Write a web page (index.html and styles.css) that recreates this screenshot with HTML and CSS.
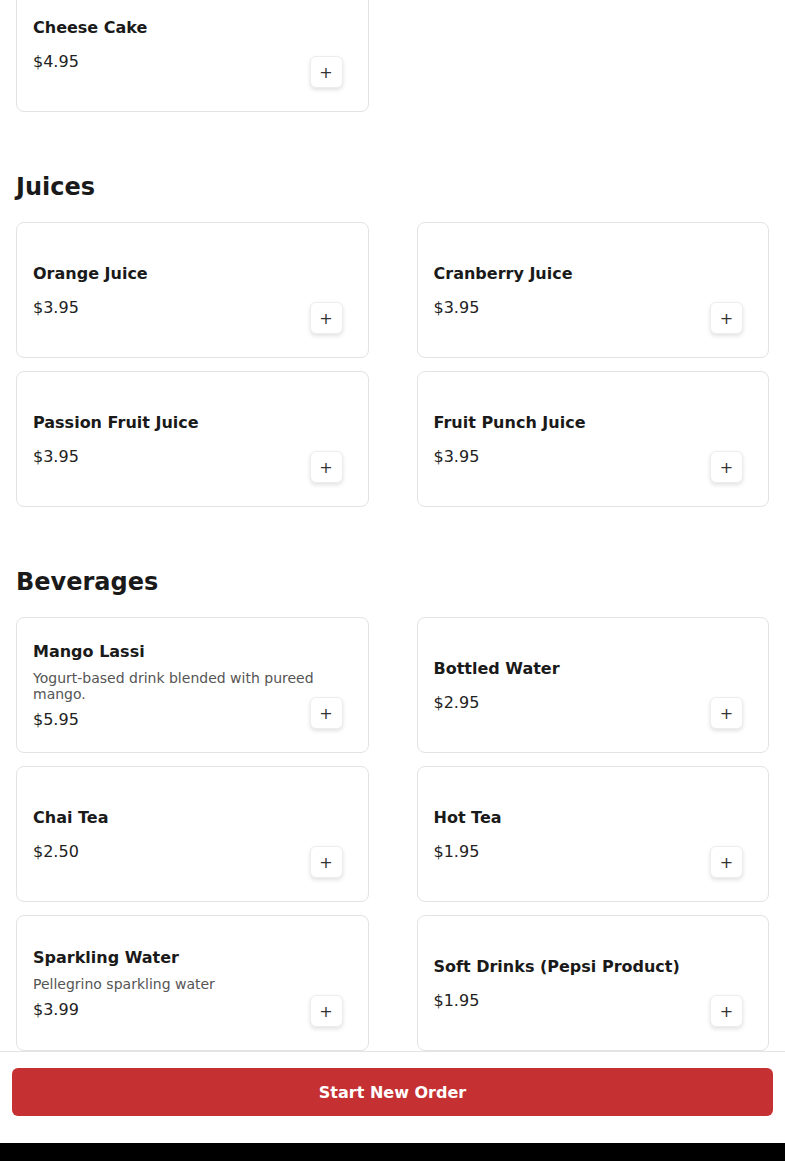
FILE: index.html
```html
<!DOCTYPE html>
<html lang="en">
<head>
    <meta charset="UTF-8">
    <meta name="viewport" content="width=device-width, initial-scale=1.0">
    <title>Menu</title>
    <link rel="stylesheet" href="styles.css">
</head>
<body>

    <main class="menu">

        <!-- Desserts (scrolled, only last row visible) -->
        <section class="section section-scrolled">
            <div class="grid">
                <div class="card">
                    <div class="info">
                        <p class="name">Cheese Cake</p>
                        <p class="price">$4.95</p>
                    </div>
                    <button class="add" type="button">+</button>
                </div>
            </div>
        </section>

        <section class="section">
            <h2>Juices</h2>
            <div class="grid">
                <div class="card">
                    <div class="info">
                        <p class="name">Orange Juice</p>
                        <p class="price">$3.95</p>
                    </div>
                    <button class="add" type="button">+</button>
                </div>
                <div class="card">
                    <div class="info">
                        <p class="name">Cranberry Juice</p>
                        <p class="price">$3.95</p>
                    </div>
                    <button class="add" type="button">+</button>
                </div>
                <div class="card">
                    <div class="info">
                        <p class="name">Passion Fruit Juice</p>
                        <p class="price">$3.95</p>
                    </div>
                    <button class="add" type="button">+</button>
                </div>
                <div class="card">
                    <div class="info">
                        <p class="name">Fruit Punch Juice</p>
                        <p class="price">$3.95</p>
                    </div>
                    <button class="add" type="button">+</button>
                </div>
            </div>
        </section>

        <section class="section">
            <h2>Beverages</h2>
            <div class="grid">
                <div class="card">
                    <div class="info">
                        <p class="name">Mango Lassi</p>
                        <p class="desc">Yogurt-based drink blended with pureed mango.</p>
                        <p class="price">$5.95</p>
                    </div>
                    <button class="add" type="button">+</button>
                </div>
                <div class="card">
                    <div class="info">
                        <p class="name">Bottled Water</p>
                        <p class="price">$2.95</p>
                    </div>
                    <button class="add" type="button">+</button>
                </div>
                <div class="card">
                    <div class="info">
                        <p class="name">Chai Tea</p>
                        <p class="price">$2.50</p>
                    </div>
                    <button class="add" type="button">+</button>
                </div>
                <div class="card">
                    <div class="info">
                        <p class="name">Hot Tea</p>
                        <p class="price">$1.95</p>
                    </div>
                    <button class="add" type="button">+</button>
                </div>
                <div class="card">
                    <div class="info">
                        <p class="name">Sparkling Water</p>
                        <p class="desc">Pellegrino sparkling water</p>
                        <p class="price">$3.99</p>
                    </div>
                    <button class="add" type="button">+</button>
                </div>
                <div class="card">
                    <div class="info">
                        <p class="name">Soft Drinks (Pepsi Product)</p>
                        <p class="price">$1.95</p>
                    </div>
                    <button class="add" type="button">+</button>
                </div>
            </div>
        </section>

    </main>

    <footer class="footer">
        <div class="footer-inner">
            <button class="start-btn" type="button">Start New Order</button>
        </div>
        <div class="home-bar"></div>
    </footer>

</body>
</html>
```

FILE: styles.css
```css
body {
    font-family: "DejaVu Sans", Verdana, sans-serif;
    background-color: #fff;
    color: #1a1a1a;
    margin: 0;
    padding: 0;
    overflow: hidden;
}

.menu {
    padding: 0 16px 160px;
}

.section {
    margin-top: 59px;
}

.section-scrolled {
    margin-top: -24px;
}

.section h2 {
    font-size: 24px;
    line-height: 32px;
    font-weight: bold;
    margin: 0 0 19px;
    color: #1a1a1a;
}

.grid {
    display: grid;
    grid-template-columns: 1fr 1fr;
    column-gap: 48px;
    row-gap: 13px;
}

.card {
    position: relative;
    display: flex;
    box-sizing: border-box;
    min-height: 136px;
    padding: 17px 16px 16px;
    border: 1px solid #e3e3e3;
    border-radius: 8px;
    background: #fff;
}

.info {
    flex: 1;
    display: flex;
    flex-direction: column;
    justify-content: center;
}

.info p {
    margin: 0;
}

.name {
    font-size: 16px;
    line-height: 24px;
    font-weight: bold;
    color: #1a1a1a;
    margin-bottom: 4px !important;
}

.desc {
    font-size: 14px;
    line-height: 16px;
    color: #555;
    margin-top: 2px !important;
}

.price {
    font-size: 16px;
    line-height: 24px;
    color: #222;
    margin-top: 6px !important;
}

.add {
    position: absolute;
    right: 25px;
    bottom: 23px;
    width: 33px;
    height: 32px;
    padding: 0;
    border: 1px solid #ededed;
    border-radius: 6px;
    background: #fff;
    box-shadow: 0 2px 4px rgba(0, 0, 0, 0.12);
    font-family: "DejaVu Sans", sans-serif;
    font-size: 16px;
    color: #333;
    cursor: pointer;
}

.footer {
    position: fixed;
    left: 0;
    right: 0;
    bottom: 0;
    background: #fff;
}

.footer-inner {
    border-top: 1px solid #e3e3e3;
    padding: 16px 12px 27px;
}

.start-btn {
    display: block;
    width: 100%;
    height: 48px;
    border: none;
    border-radius: 6px;
    background-color: #c53032;
    color: #fff;
    font-family: "DejaVu Sans", sans-serif;
    font-size: 16px;
    font-weight: bold;
    cursor: pointer;
}

.home-bar {
    height: 18px;
    background: #000;
}
```
